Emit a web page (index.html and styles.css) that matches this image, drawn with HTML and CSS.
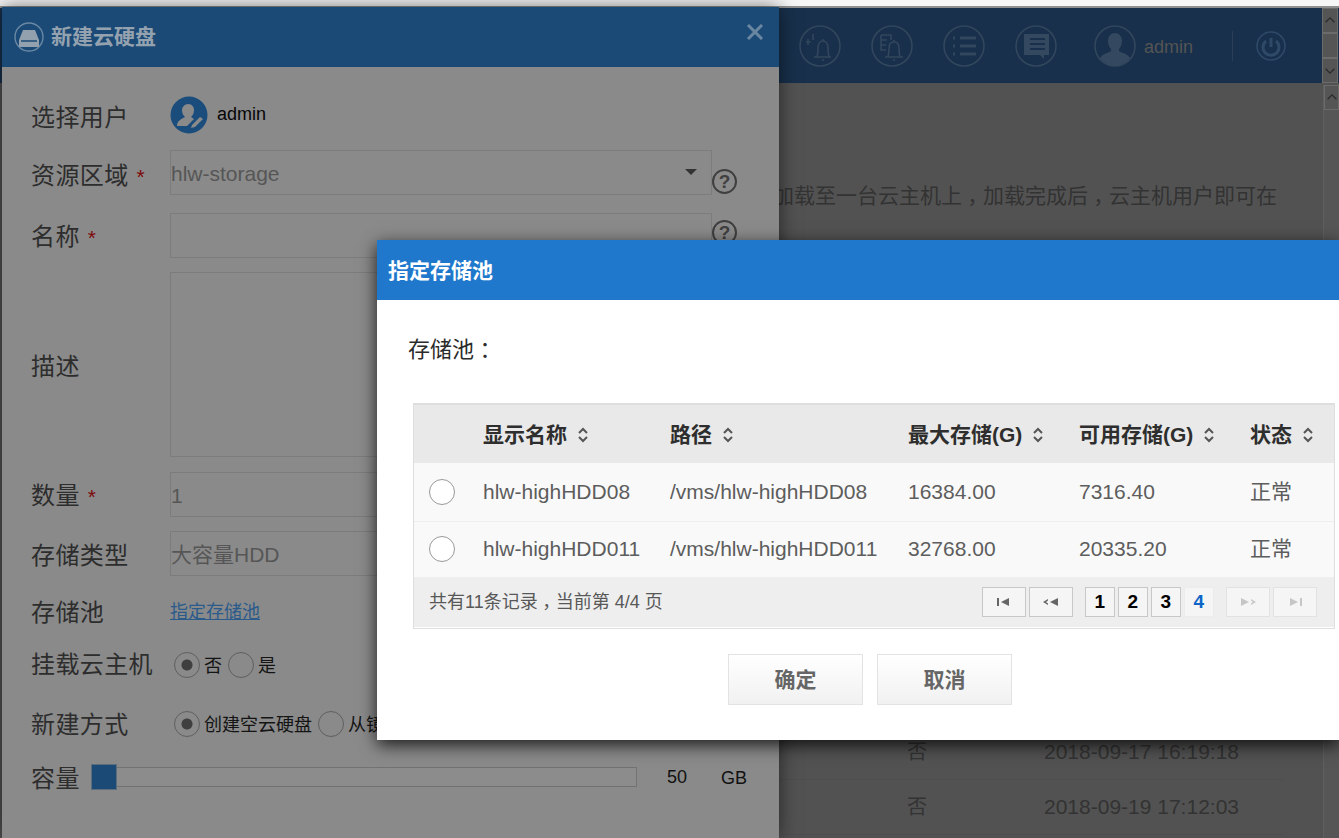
FILE: index.html
```html
<!DOCTYPE html>
<html lang="zh">
<head>
<meta charset="utf-8">
<title>新建云硬盘</title>
<link rel="stylesheet" href="styles.css">
</head>
<body>
<div class="topstrip"></div>
<header class="topbar">
  <svg class="ticon" viewBox="0 0 42 42"><circle cx="21" cy="21" r="20"/><path d="M15 32h17M18 32c1-3 1-5 1-9 0-4 2-7 5-7s5 3 5 7c0 4 0 6 1 9M23 35h2M24 14v2M9 14v6M14 9v6M7 17h5"/></svg>
  <svg class="ticon" viewBox="0 0 42 42"><circle cx="21" cy="21" r="20"/><path d="M14 32h18M17 32c1-3 1-5 1-9 0-4 2-6 5-6s5 2 5 6c0 4 0 6 1 9M22 35h2M23 15v2M10 10h10v5M10 10v15h5M10 15h6M10 20h5"/></svg>
  <svg class="ticon" viewBox="0 0 42 42"><circle cx="21" cy="21" r="20"/><path class="thick" d="M17 13h16M17 21h16M17 29h16"/><path class="thick" d="M10 13h2M10 21h2M10 29h2"/></svg>
  <svg class="ticon" viewBox="0 0 42 42"><circle cx="21" cy="21" r="20"/><path class="solid" d="M9 9h25v21h-5v4l-4-4H9z"/><path class="cut" d="M15 14h15M15 19h15M15 24h15"/></svg>
  <svg class="ticon user" viewBox="0 0 42 42"><circle cx="21" cy="21" r="20"/><path class="solid" d="M21 8c4 0 7 3 7 8 0 4-2 7-3 8v2c3 2 9 3 11 7-3 4-9 8-15 8s-12-4-15-8c2-4 8-5 11-7v-2c-1-1-3-4-3-8 0-5 3-8 7-8z"/></svg>
  <span class="tname">admin</span>
  <span class="tdivider"></span>
  <svg class="tpower" viewBox="0 0 30 30"><circle cx="15" cy="15" r="14"/><path class="thick" d="M15 7v9"/><path class="thick" d="M10 10a8 8 0 1 0 10 0"/></svg>
  <div class="sbar">
    <span class="sbtn"><svg viewBox="0 0 16 12"><path d="M3 8l5-5 5 5"/></svg></span>
    <span class="sbtn mid"></span>
    <span class="sbtn"><svg viewBox="0 0 16 12"><path d="M3 4l5 5 5-5"/></svg></span>
  </div>
</header>
<main class="content">
  <div class="bgmain">
    <p class="note">加载至一台云主机上<span class="fp">，</span>加载完成后<span class="fp">，</span>云主机用户即可在</p>
    <div class="bgrow"><span class="bgflag">否</span><span>2018-09-17 16:19:18</span></div>
    <div class="bgrow"><span class="bgflag">否</span><span>2018-09-19 17:12:03</span></div>
  </div>
  <div class="vbar">
    <span class="sbtn"><svg viewBox="0 0 16 12"><path d="M3 8l5-5 5 5"/></svg></span>
  </div>
</main>

<section class="win">
  <div class="win-head">
    <svg class="hdd" viewBox="0 0 30 30"><circle cx="15" cy="15" r="14"/><path class="solid" d="M9 8h12l4 10v6a1 1 0 0 1-1 1H6a1 1 0 0 1-1-1v-6z"/><path class="cut" d="M7 19h16"/></svg>
    <h2>新建云硬盘</h2>
    <svg class="close" viewBox="0 0 18 16"><path d="M2 1l14 14M16 1L2 15"/></svg>
  </div>
  <form class="form">
    <div class="lab lab-a">选择用户</div>
    <div class="val user-val">
      <svg class="avatar" viewBox="0 0 38 38"><circle cx="19" cy="19" r="18.500"/><path class="w" d="M18 8c4 0 6 3 6 6 0 3-1 5-3 7l3 2-7 7H7c0-5 4-7 8-9-2-2-3-4-3-7 0-3 3-6 6-6z"/><path class="w" d="M22 29l8-8 3 2-8 8-4 1z"/></svg>
      <span class="uname">admin</span>
    </div>

    <div class="lab lab-d">资源区域<i>*</i></div>
    <div class="val">
      <div class="field"><span>hlw-storage</span><b class="caret"></b></div>
      <span class="help">?</span>
    </div>

    <div class="lab lab-b">名称<i>*</i></div>
    <div class="val">
      <div class="field"></div>
      <span class="help help-2">?</span>
    </div>

    <div class="lab lab-mid">描述</div>
    <div class="val"><div class="field tall"></div></div>

    <div class="lab lab-b">数量<i>*</i></div>
    <div class="val"><div class="field"><span>1</span></div></div>

    <div class="lab lab-c">存储类型</div>
    <div class="val"><div class="field"><span>大容量HDD</span></div></div>

    <div class="lab lab-a">存储池</div>
    <div class="val pool"><a href="#">指定存储池</a></div>

    <div class="lab lab-up">挂载云主机</div>
    <div class="val radios">
      <span class="rd on"></span><span class="rt">否</span><span class="rd"></span><span class="rt">是</span>
    </div>

    <div class="lab lab-up2">新建方式</div>
    <div class="val radios">
      <span class="rd on"></span><span class="rt">创建空云硬盘</span><span class="rd"></span><span class="rt">从镜像创建</span>
    </div>

    <div class="lab lab-size">容量</div>
    <div class="val sizer">
      <div class="track"><span class="handle"></span></div>
      <span class="sz-num">50</span><span class="sz-gb">GB</span>
    </div>
  </form>
</section>

<section class="dlg">
  <div class="dlg-head">指定存储池</div>
  <div class="dlg-body">
    <p class="dlg-label">存储池<span class="fp">：</span></p>
    <div class="tbl-wrap">
      <table class="tbl">
        <colgroup><col class="c0"><col class="c1"><col class="c2"><col class="c3"><col class="c4"><col class="c5"></colgroup>
        <thead>
          <tr>
            <th></th>
            <th>显示名称<svg class="sort" viewBox="0 0 12 16"><path d="M2 6l4-4 4 4M2 10l4 4 4-4"/></svg></th>
            <th>路径<svg class="sort" viewBox="0 0 12 16"><path d="M2 6l4-4 4 4M2 10l4 4 4-4"/></svg></th>
            <th>最大存储(G)<svg class="sort" viewBox="0 0 12 16"><path d="M2 6l4-4 4 4M2 10l4 4 4-4"/></svg></th>
            <th>可用存储(G)<svg class="sort" viewBox="0 0 12 16"><path d="M2 6l4-4 4 4M2 10l4 4 4-4"/></svg></th>
            <th>状态<svg class="sort" viewBox="0 0 12 16"><path d="M2 6l4-4 4 4M2 10l4 4 4-4"/></svg></th>
          </tr>
        </thead>
        <tbody>
          <tr><td><span class="rdw"></span></td><td>hlw-highHDD08</td><td>/vms/hlw-highHDD08</td><td>16384.00</td><td>7316.40</td><td>正常</td></tr>
          <tr><td><span class="rdw"></span></td><td>hlw-highHDD011</td><td>/vms/hlw-highHDD011</td><td>32768.00</td><td>20335.20</td><td>正常</td></tr>
        </tbody>
      </table>
      <div class="pager">
        <span class="count">共有11条记录<span class="fp">，</span>当前第 4/4 页</span>
        <div class="pg-btns">
          <span class="pg wide"><svg viewBox="0 0 20 10"><path d="M3 1h2v8H3zM15 1v8L7 5z"/></svg></span>
          <span class="pg wide"><svg viewBox="0 0 20 10"><path d="M2 5l5-3v1.500L5 5l2 1.500V8zM17 1v8L9 5z"/></svg></span>
          <span class="pg pn first">1</span>
          <span class="pg pn">2</span>
          <span class="pg pn">3</span>
          <span class="pg pn cur">4</span>
          <span class="pg wide off gap"><svg viewBox="0 0 20 10"><path d="M3 1v8l8-4zM13 2l5 3-5 3V6.500L15 5l-2-1.500z"/></svg></span>
          <span class="pg wide off"><svg viewBox="0 0 20 10"><path d="M5 1v8l8-4zM15 1h2v8h-2z"/></svg></span>
        </div>
      </div>
    </div>
    <div class="actions">
      <button type="button" class="btn">确定</button>
      <button type="button" class="btn">取消</button>
    </div>
  </div>
</section>
</body>
</html>
```
FILE: styles.css
```css
* { box-sizing: border-box; }
html, body { height: 100%; }
body {
  margin: 0;
  height: 838px;
  overflow: hidden;
  position: relative;
  display: flex;
  flex-direction: column;
  background: #525252;
  font-family: "Liberation Sans", "Noto Sans CJK SC", sans-serif;
  color: #333;
}
.fp {
  display: inline-block;
  width: 1em;
  text-align: center;
  font-feature-settings: "halt";
}
.topstrip { height: 8px; flex: none; background: #f6f6f6; border-bottom: 2px solid #8f8f8f; }

/* page behind the overlay */
.topbar {
  flex: none;
  height: 75px;
  display: flex;
  align-items: center;
  padding-left: 799px;
  background: #18304b;
}
.ticon { width: 42px; height: 42px; margin-right: 30px; flex: none; fill: none; stroke: #32475d; stroke-width: 1.6; }
.ticon:nth-child(4) { margin-right: 37px; }
.ticon .thick, .tpower .thick { stroke-width: 3; }
.ticon .solid { fill: #34485f; stroke: none; }
.ticon .cut { stroke: #18304b; stroke-width: 2; }
.ticon.user { margin-right: 8px; }
.tname { width: 49px; padding-top: 2px; font-size: 18px; line-height: 24px; color: #545454; }
.tdivider { width: 1px; height: 30px; margin-left: 39px; background: #2a3f57; }
.tpower { width: 30px; height: 30px; margin-left: 23px; fill: none; stroke: #2f4a68; stroke-width: 1.5; }
.sbar {
  margin-left: 36px;
  width: 16px;
  height: 75px;
  flex: none;
  display: flex;
  flex-direction: column;
  background: #555;
}
.sbtn {
  display: block;
  height: 25px;
  flex: none;
  background: #555;
  border: 1px solid #6b6b6b;
}
.sbtn.mid { flex: 1; }
.sbtn svg { display: block; width: 14px; height: 23px; fill: none; stroke: #2c2c2c; stroke-width: 1.6; }

.content { flex: 1; display: flex; min-height: 0; }
.bgmain { flex: 1; padding-left: 773px; overflow: hidden; }
.note {
  margin: 99px 0 515px;
  font-size: 21px;
  line-height: 28px;
  white-space: nowrap;
  color: #333;
}
.bgrow {
  height: 55px;
  display: flex;
  align-items: center;
  font-size: 21px;
  line-height: 28px;
  color: #333;
  border-bottom: 1px solid #4e4e4e;
  margin-left: -44px;
  padding-left: 178px;
  width: 555px;
}
.bgflag { width: 137px; font-size: 20px; }
.vbar { width: 16px; flex: none; margin-top: 2px; border-left: 1px solid #5f5f5f; background: #565656; }

/* behind window */
.win {
  position: absolute;
  left: 2px;
  top: 7px;
  width: 777px;
  height: 831px;
  background: #8a8a8a;
  box-shadow: 0 0 18px rgba(0, 0, 0, .55);
}
.win-head {
  height: 60px;
  display: flex;
  align-items: center;
  padding-left: 12px;
  background: #1b4a76;
}
.hdd { width: 30px; height: 30px; fill: none; stroke: #6b88a4; stroke-width: 1.4; }
.hdd .solid { fill: #93a0ad; stroke: none; }
.hdd .cut { stroke: #1b4a76; stroke-width: 1.5; }
.win-head h2 {
  margin: 0 0 0 7px;
  font-size: 21px;
  line-height: 28px;
  font-weight: 700;
  color: #94a2b0;
}
.close {
  width: 18px;
  height: 16px;
  margin-left: auto;
  margin-right: 15px;
  margin-bottom: 10px;
  fill: none;
  stroke: #6a87a2;
  stroke-width: 3;
}
.form {
  display: grid;
  grid-template-columns: 139px 1fr;
  grid-template-rows: 55px 63px 59px 200px 59px 59px 55px 59px 55px 40px;
  margin-top: 28px;
  padding-left: 29px;
}
.lab {
  font-size: 24px;
  line-height: 44px;
  height: 44px;
  letter-spacing: .4px;
  color: #2d2d2d;
  white-space: nowrap;
}
.lab i {
  margin-left: 8px;
  font-style: normal;
  font-size: 21px;
  color: #7d0a0a;
}
.lab-a { margin-top: 1px; }
.lab-b { margin-top: 2px; }
.lab-c { margin-top: 3px; }
.lab-d { margin-top: 4px; }
.lab-up { margin-top: -2px; }
.lab-up2 { margin-top: -1px; }
.lab-mid { margin-top: 73px; }
.lab-size { margin-top: -2px; }
.val { display: flex; align-items: flex-start; font-size: 21px; color: #565656; }
.val.radios, .user-val { height: 40px; align-items: center; }
.user-val { height: 38px; margin-top: 1px; }
.avatar { width: 38px; height: 38px; margin-right: 9px; }
.avatar circle { fill: #1a4c7c; }
.avatar .w { fill: #8a8a8a; }
.uname { margin-bottom: 2px; font-size: 18px; line-height: 24px; color: #060606; }
.field {
  position: relative;
  width: 542px;
  height: 45px;
  padding-left: 0;
  display: flex;
  align-items: center;
  border: 1px solid #7c7c7c;
  line-height: 44px;
}
.field span { padding-top: 2px; }
.field.tall { height: 185px; }
.caret {
  position: absolute;
  right: 14px;
  top: 18px;
  width: 0;
  height: 0;
  border: 6px solid transparent;
  border-top: 6px solid #333;
  border-bottom: 0;
}
.help {
  width: 25px;
  height: 25px;
  margin-top: 19px;
  border: 2px solid #3f3f3f;
  border-radius: 50%;
  text-align: center;
  font-size: 19px;
  line-height: 21px;
  font-weight: 700;
  color: #3f3f3f;
}
.help-2 { margin-top: 7px; }
.pool { height: 44px; align-items: center; }
.pool a { font-size: 18px; line-height: 24px; color: #2b5b8b; }
.radios { padding-left: 4px; font-size: 18px; line-height: 26px; color: #141414; white-space: nowrap; }
.rt { padding-top: 2px; }
.rd {
  width: 26px;
  height: 26px;
  margin-right: 4px;
  flex: none;
  border: 1px solid #5f5f5f;
  border-radius: 50%;
  background: #8a8a8a;
}
.rd + .rt + .rd { margin-left: 6px; }
.rd.on { background: radial-gradient(circle, #3f3f3f 0 5px, #8a8a8a 6px); }
.sizer { margin-left: -79px; padding-top: 8px; }
.track {
  position: relative;
  width: 546px;
  height: 20px;
  border: 1px solid #727272;
  background: #8c8c8c;
}
.handle {
  position: absolute;
  left: -1px;
  top: -4px;
  width: 26px;
  height: 26px;
  background: #1b4a76;
  border: 1px solid #5c6d7e;
}
.sz-num { margin-left: 30px; font-size: 18px; line-height: 20px; color: #111; }
.sz-gb { margin-left: 34px; margin-top: 1px; font-size: 18px; line-height: 20px; color: #111; }

/* front dialog */
.dlg {
  position: absolute;
  left: 377px;
  top: 240px;
  width: 962px;
  height: 500px;
  background: #fff;
  box-shadow: 0 5px 16px rgba(0, 0, 0, .8);
}
.dlg-head {
  height: 60px;
  padding: 1px 0 0 11px;
  font-size: 21px;
  line-height: 60px;
  font-weight: 700;
  color: #fff;
  background: #1f78cc;
}
.dlg-body { padding: 33px 0 0 31px; }
.dlg-label { margin: 0; font-size: 22px; line-height: 34px; color: #2b2b2b; }
.tbl-wrap { width: 922px; height: 226px; margin: 36px 0 0 5px; border: 1px solid #dedede; border-top-width: 2px; }
.tbl { width: 920px; table-layout: fixed; border-collapse: collapse; }
.c0 { width: 68px; }
.c1 { width: 187px; }
.c2 { width: 238px; }
.c3 { width: 171px; }
.c4 { width: 171px; }
.c5 { width: 85px; }
.tbl th {
  height: 58px;
  padding: 2px 0 0 1px;
  text-align: left;
  font-size: 21px;
  line-height: 28px;
  font-weight: 700;
  color: #2e2e2e;
  background: #e9e9e9;
  white-space: nowrap;
}
.sort { width: 12px; height: 16px; margin-left: 10px; vertical-align: -1px; fill: none; stroke: #555; stroke-width: 2; }
.tbl td {
  height: 58px;
  padding: 0 0 0 1px;
  font-size: 21px;
  line-height: 28px;
  color: #5d5d5d;
  background: #f9f9f9;
  border-bottom: 1px solid #eeeeee;
  white-space: nowrap;
}
.tbl tr:last-child td { height: 56px; border-bottom: 0; }
.rdw {
  display: block;
  width: 26px;
  height: 26px;
  margin-left: 14px;
  border: 1px solid #999;
  border-radius: 50%;
  background: #fff;
}
.pager {
  height: 50px;
  display: flex;
  align-items: center;
  padding-left: 15px;
  background: #eee;
}
.count { font-size: 18px; line-height: 24px; color: #585858; white-space: nowrap; }
.pg-btns { display: flex; align-items: center; gap: 3px; margin-left: 319px; }
.pg {
  width: 30px;
  height: 30px;
  flex: none;
  display: flex;
  align-items: center;
  justify-content: center;
  border: 1px solid #c8c8c8;
  background: #f5f5f5;
}
.pg.wide { width: 44px; }
.pg svg { width: 20px; height: 10px; fill: #666; }
.pg.pn { font-size: 19px; font-weight: 700; color: #000; }
.pg.first { margin-left: 9px; }
.pg.cur { border-color: #ececec; color: #0f66c6; }
.pg.off { border-color: #e2e2e2; }
.pg.off svg { fill: #c6c6c6; }
.pg.gap { margin-left: 9px; }
.actions { display: flex; gap: 14px; margin: 25px 0 0 320px; }
.btn {
  width: 135px;
  height: 51px;
  padding: 0 0 3px;
  font-family: inherit;
  font-size: 21px;
  font-weight: 700;
  color: #666;
  border: 1px solid #e3e3e3;
  background: linear-gradient(#fff, #f1f1f1);
}
```
